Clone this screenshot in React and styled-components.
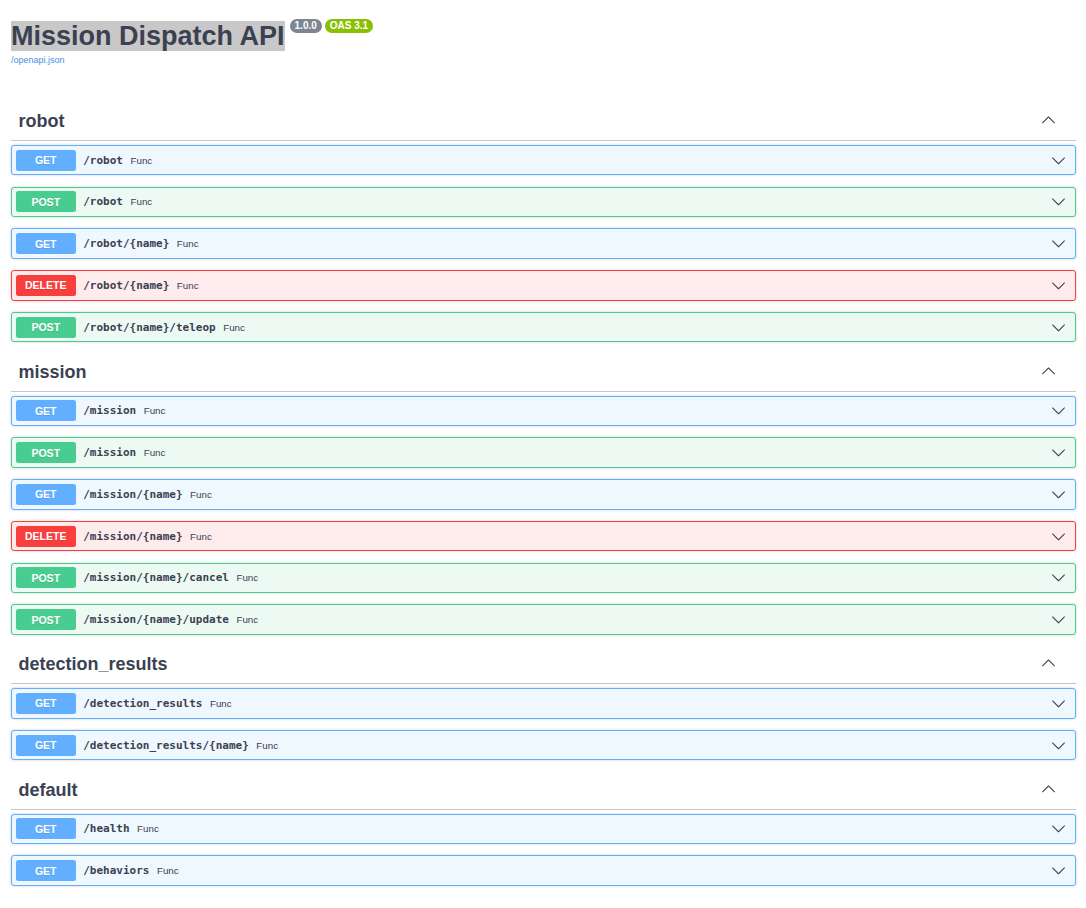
import React from 'react'
import styled, { createGlobalStyle } from 'styled-components'

const GlobalStyle = createGlobalStyle`
  body {
    margin: 0;
    background: #fff;
    font-family: "Liberation Sans", Arial, sans-serif;
    color: #3b4151;
  }
`

const methodColors = {
    GET: { border: '#61affe', bg: '#eff7ff' },
    POST: { border: '#49cc90', bg: '#edfaf4' },
    DELETE: { border: '#f93e3e', bg: '#feecec' },
}

const sections = [
    {
        name: 'robot',
        ops: [
            ['GET', '/robot'],
            ['POST', '/robot'],
            ['GET', '/robot/{name}'],
            ['DELETE', '/robot/{name}'],
            ['POST', '/robot/{name}/teleop'],
        ],
    },
    {
        name: 'mission',
        ops: [
            ['GET', '/mission'],
            ['POST', '/mission'],
            ['GET', '/mission/{name}'],
            ['DELETE', '/mission/{name}'],
            ['POST', '/mission/{name}/cancel'],
            ['POST', '/mission/{name}/update'],
        ],
    },
    {
        name: 'detection_results',
        ops: [
            ['GET', '/detection_results'],
            ['GET', '/detection_results/{name}'],
        ],
    },
    {
        name: 'default',
        ops: [
            ['GET', '/health'],
            ['GET', '/behaviors'],
        ],
    },
]

const Page = styled.div`
  padding: 0 10px 40px 11px;
`

const Info = styled.div`
  padding-top: 21px;
  margin-bottom: 37.75px;
`

const TitleRow = styled.div`
  display: flex;
  align-items: flex-start;
`

const Title = styled.h2`
  margin: 0;
  font-size: 27px;
  font-weight: 700;
  line-height: normal;
  color: #3b4151;

  span {
    background: #c8c8c8;
  }
`

const Badges = styled.div`
  display: flex;
  gap: 3px;
  margin-left: 5px;
  margin-top: -2px;
`

const Badge = styled.span`
  display: inline-block;
  padding: 2px 5px;
  border-radius: 57px;
  background: ${p => p.color};
  color: #fff;
  font-size: 10px;
  font-weight: 700;
  line-height: 10px;
`

const SpecLink = styled.a`
  display: block;
  margin-top: 3px;
  font-size: 9px;
  color: #4990e2;
  text-decoration: none;
`

const TagHeader = styled.div`
  display: flex;
  align-items: center;
  height: 37.25px;
  padding: 0 20px 0 7.5px;
  border-bottom: 1px solid #c4c6cb;
  margin-bottom: 3.75px;
`

const TagName = styled.h3`
  margin: 0;
  flex: 1;
  font-size: 18px;
  font-weight: 700;
  line-height: normal;
  color: #3b4151;
`

const TagArrow = styled.svg`
  width: 15px;
  height: 15px;
  margin-bottom: 4px;
  fill: #3b4151;
`

const OpBlock = styled.div`
  display: flex;
  align-items: center;
  padding: 3.75px;
  margin-bottom: 11.25px;
  border: 1px solid ${p => methodColors[p.method].border};
  background: ${p => methodColors[p.method].bg};
  border-radius: 3px;
  box-shadow: 0 0 3px rgba(0, 0, 0, 0.19);
`

const Method = styled.span`
  min-width: 60px;
  padding: 4.5px 0;
  border-radius: 2.5px;
  background: ${p => methodColors[p.method].border};
  color: #fff;
  text-align: center;
  font-size: 10.5px;
  font-weight: 700;
  line-height: 12px;
  text-shadow: 0 1px 0 rgba(0, 0, 0, 0.1);
`

const Path = styled.span`
  padding-left: 7.5px;
  font-family: "DejaVu Sans Mono", monospace;
  font-size: 11px;
  font-weight: 700;
  color: #3b4151;
`

const Summary = styled.span`
  padding-left: 7.5px;
  flex: 1;
  font-size: 9.75px;
  color: #3b4151;
`

const OpArrow = styled.svg`
  width: 15px;
  height: 15px;
  margin-right: 5px;
  fill: #3b4151;
`

const downPath = 'M17.418 6.109c.272-.268.709-.268.979 0s.271.701 0 .969l-7.908 7.83c-.27.268-.707.268-.979 0l-7.908-7.83c-.27-.268-.27-.701 0-.969.271-.268.709-.268.979 0L10 13.25l7.418-7.141z'
const upPath = 'M17.418 14.908c.272.268.709.268.979 0s.271-.701 0-.969l-7.908-7.83c-.27-.268-.707-.268-.979 0l-7.908 7.83c-.27.268-.27.701 0 .969.271.268.709.268.979 0L10 7.767l7.418 7.141z'

function Operation({ method, path }) {
    return (
        <OpBlock method={method}>
            <Method method={method}>{method}</Method>
            <Path>{path}</Path>
            <Summary>Func</Summary>
            <OpArrow viewBox="0 0 20 20"><path d={downPath} /></OpArrow>
        </OpBlock>
    )
}

function TagSection({ name, ops }) {
    return (
        <section>
            <TagHeader>
                <TagName>{name}</TagName>
                <TagArrow viewBox="0 0 20 20"><path d={upPath} /></TagArrow>
            </TagHeader>
            {ops.map(([method, path], i) => (
                <Operation key={i} method={method} path={path} />
            ))}
        </section>
    )
}

export default function App() {
    return (
        <Page>
            <GlobalStyle />
            <Info>
                <TitleRow>
                    <Title><span>Mission Dispatch API</span></Title>
                    <Badges>
                        <Badge color="#7d8492">1.0.0</Badge>
                        <Badge color="#89bf04">OAS 3.1</Badge>
                    </Badges>
                </TitleRow>
                <SpecLink href="#">/openapi.json</SpecLink>
            </Info>
            {sections.map(s => (
                <TagSection key={s.name} name={s.name} ops={s.ops} />
            ))}
        </Page>
    )
}
